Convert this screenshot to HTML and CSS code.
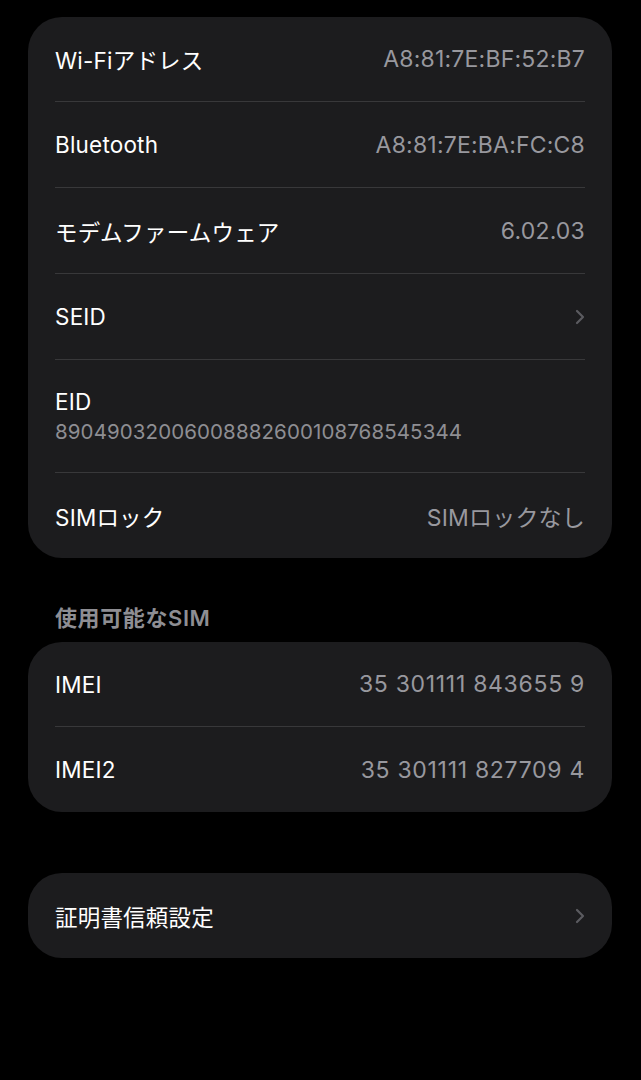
FILE: index.html
```html
<!DOCTYPE html>
<html lang="ja">
<head>
	<meta charset="UTF-8">
	<link rel="stylesheet" href="styles.css">
	<title>情報</title>
</head>
<body>
	<div class="page">
		<div class="card first">
			<div class="row">
				<span class="label">Wi-Fiアドレス</span>
				<span class="value">A8:81:7E:BF:52:B7</span>
			</div>
			<div class="row">
				<span class="label">Bluetooth</span>
				<span class="value">A8:81:7E:BA:FC:C8</span>
			</div>
			<div class="row">
				<span class="label">モデムファームウェア</span>
				<span class="value">6.02.03</span>
			</div>
			<div class="row">
				<span class="label">SEID</span>
				<svg class="chevron" width="12" height="18" viewBox="0 0 12 18"><polyline points="3,3 9,9 3,15" /></svg>
			</div>
			<div class="row tall">
				<span class="label">EID</span>
				<span class="sub">89049032006008882600108768545344</span>
			</div>
			<div class="row">
				<span class="label">SIMロック</span>
				<span class="value">SIMロックなし</span>
			</div>
		</div>

		<p class="section">使用可能なSIM</p>
		<div class="card">
			<div class="row">
				<span class="label">IMEI</span>
				<span class="value num">35 301111 843655 9</span>
			</div>
			<div class="row">
				<span class="label">IMEI2</span>
				<span class="value num">35 301111 827709 4</span>
			</div>
		</div>

		<div class="card last">
			<div class="row">
				<span class="label">証明書信頼設定</span>
				<svg class="chevron" width="12" height="18" viewBox="0 0 12 18"><polyline points="3,3 9,9 3,15" /></svg>
			</div>
		</div>
	</div>
</body>
</html>
```

FILE: styles.css
```css
body {
	margin: 0;
	background: #000;
	font-family: "Inter", "Noto Sans CJK JP", sans-serif;
	color: #fff;
}
.page {
	padding: 17px 29px 0 28px;
}
.card {
	background: #1c1c1e;
	border-radius: 34px;
	padding: 0 27px;
}
.row {
	height: 85px;
	display: flex;
	align-items: center;
	justify-content: space-between;
	border-top: 1px solid #38383a;
}
.row:first-child {
	border-top: none;
	height: 84px;
}
.card.last .row {
	height: 85px;
}
.row.tall {
	height: 112px;
	flex-direction: column;
	align-items: flex-start;
	justify-content: center;
	gap: 4px;
}
.label {
	font-size: 22.5px;
	letter-spacing: 0.2px;
}
.value {
	font-size: 23px;
	letter-spacing: 0.2px;
	color: #98989e;
}
.value.num {
	letter-spacing: 0.7px;
}
.sub {
	font-size: 20.5px;
	letter-spacing: 0.1px;
	color: #8e8e93;
}
.chevron {
	margin-right: -1px;
}
.chevron polyline {
	fill: none;
	stroke: #5b5b60;
	stroke-width: 2.2;
	stroke-linecap: round;
	stroke-linejoin: round;
}
.section {
	margin: 0;
	padding: 42px 0 0 27px;
	line-height: 36px;
	height: 36px;
	margin-bottom: 6px;
	font-size: 22px;
	font-weight: 600;
	letter-spacing: 0.6px;
	color: #8e8e93;
}
.card.last {
	margin-top: 61px;
}
```
